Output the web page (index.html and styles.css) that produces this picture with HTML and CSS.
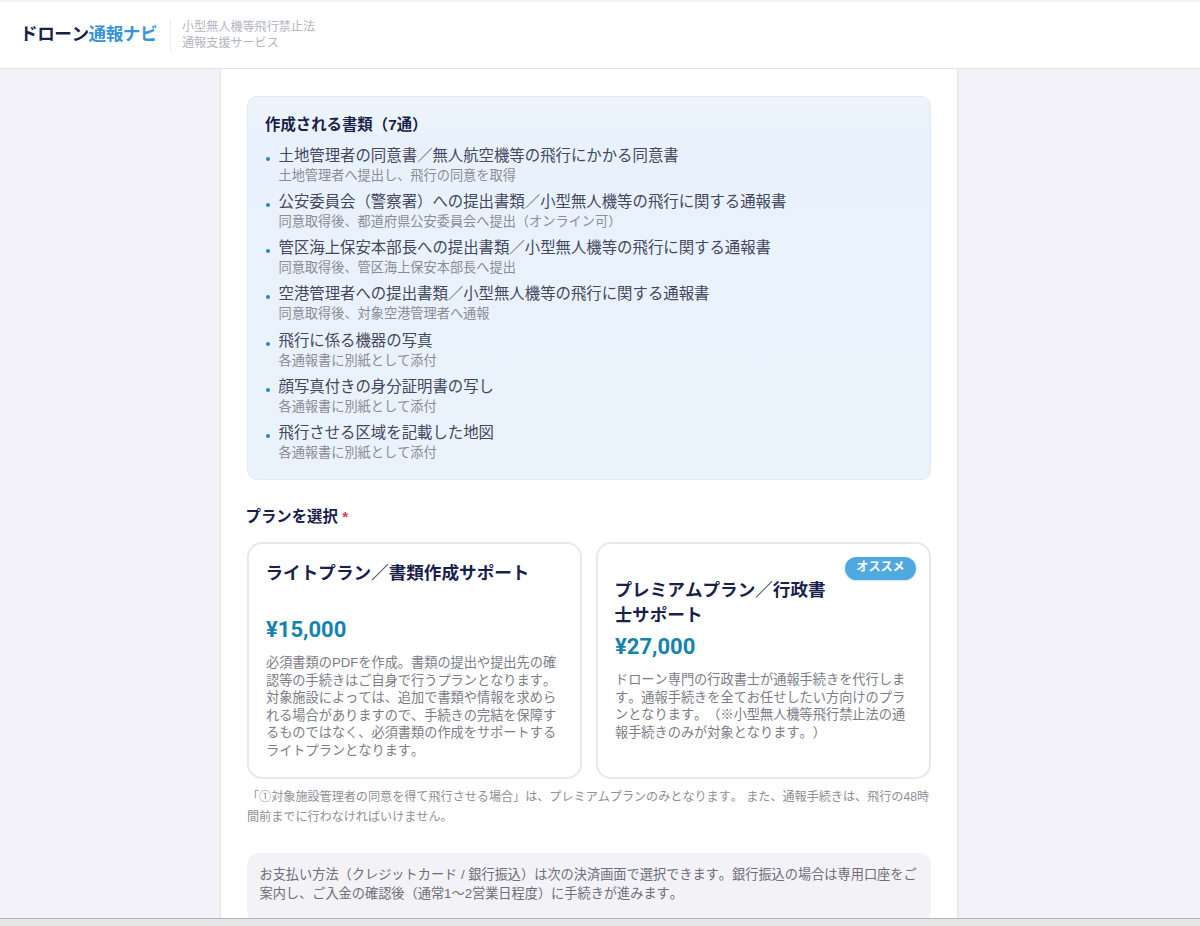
FILE: index.html
```html
<!DOCTYPE html>
<html lang="ja">
<head>
<meta charset="utf-8">
<title>ドローン通報ナビ</title>
<link rel="stylesheet" href="styles.css">
</head>
<body>
<div class="page">
  <header class="site-header">
    <div class="logo"><span class="logo-dark">ドローン</span><span class="logo-blue">通報ナビ</span></div>
    <div class="tagline">小型無人機等飛行禁止法<br>通報支援サービス</div>
  </header>
  <div class="stage">
    <main class="panel">
      <section class="docs">
        <h2 class="docs-title">作成される書類（7通）</h2>
        <ul class="doc-list">
          <li class="doc"><div class="doc-name">土地管理者の同意書／無人航空機等の飛行にかかる同意書</div><div class="doc-sub">土地管理者へ提出し、飛行の同意を取得</div></li>
          <li class="doc"><div class="doc-name">公安委員会（警察署）への提出書類／小型無人機等の飛行に関する通報書</div><div class="doc-sub">同意取得後、都道府県公安委員会へ提出（オンライン可）</div></li>
          <li class="doc"><div class="doc-name">管区海上保安本部長への提出書類／小型無人機等の飛行に関する通報書</div><div class="doc-sub">同意取得後、管区海上保安本部長へ提出</div></li>
          <li class="doc"><div class="doc-name">空港管理者への提出書類／小型無人機等の飛行に関する通報書</div><div class="doc-sub">同意取得後、対象空港管理者へ通報</div></li>
          <li class="doc"><div class="doc-name">飛行に係る機器の写真</div><div class="doc-sub">各通報書に別紙として添付</div></li>
          <li class="doc"><div class="doc-name">顔写真付きの身分証明書の写し</div><div class="doc-sub">各通報書に別紙として添付</div></li>
          <li class="doc"><div class="doc-name">飛行させる区域を記載した地図</div><div class="doc-sub">各通報書に別紙として添付</div></li>
        </ul>
      </section>
      <h2 class="plan-heading">プランを選択 <span class="required">*</span></h2>
      <div class="plans">
        <article class="plan">
          <h3 class="plan-title plan-title-tall">ライトプラン／書類作成サポート</h3>
          <div class="price">¥15,000</div>
          <p class="plan-desc">必須書類のPDFを作成。書類の提出や提出先の確認等の手続きはご自身で行うプランとなります。対象施設によっては、追加で書類や情報を求められる場合がありますので、手続きの完結を保障するものではなく、必須書類の作成をサポートするライトプランとなります。</p>
        </article>
        <article class="plan plan-premium">
          <span class="badge">オススメ</span>
          <h3 class="plan-title plan-title-narrow">プレミアムプラン／行政書士サポート</h3>
          <div class="price">¥27,000</div>
          <p class="plan-desc">ドローン専門の行政書士が通報手続きを代行します。通報手続きを全てお任せしたい方向けのプランとなります。（※小型無人機等飛行禁止法の通報手続きのみが対象となります。）</p>
        </article>
      </div>
      <p class="notice">「①対象施設管理者の同意を得て飛行させる場合」は、プレミアムプランのみとなります。 また、通報手続きは、飛行の48時間前までに行わなければいけません。</p>
      <div class="payment">お支払い方法（クレジットカード / 銀行振込）は次の決済画面で選択できます。銀行振込の場合は専用口座をご案内し、ご入金の確認後（通常1〜2営業日程度）に手続きが進みます。</div>
    </main>
  </div>
  <div class="bottom-strip"></div>
</div>
</body>
</html>
```
FILE: styles.css
```css
* { box-sizing: border-box; }
html, body { margin: 0; padding: 0; height: 100%; }
body {
  font-family: "Liberation Sans", "Noto Sans CJK JP", sans-serif;
  font-kerning: none;
  text-spacing-trim: space-all;
  background: #f3f2f8;
  color: #1b1f4b;
  overflow: hidden;
}
.page { height: 926px; display: flex; flex-direction: column; overflow: hidden; }
.site-header {
  height: 69px;
  flex: none;
  background: #fff;
  border-top: 2px solid #f3f3f3;
  border-bottom: 1px solid #e4e4e8;
  display: flex;
  align-items: center;
  padding: 0 0 1px 20px;
}
.logo { font-size: 17.6px; font-weight: 700; letter-spacing: -0.45px; line-height: 1; width: 137px; white-space: nowrap; }
.logo-dark { color: #1a1f4c; }
.logo-blue { color: #3a93d8; }
.tagline {
  margin-left: 13px;
  padding-left: 11px;
  border-left: 1px solid #ececf0;
  font-size: 12.1px;
  line-height: 16px;
  color: #b3b5bf;
}
.stage { flex: 1; min-height: 0; display: flex; justify-content: center; overflow: hidden; }
.panel {
  width: 740px;
  margin-left: -22px;
  background: #fff;
  border-left: 2px solid #e9e9ee;
  border-right: 2px solid #e9e9ee;
  padding: 27px 26px 0;
  overflow: hidden;
}
.docs {
  height: 384px;
  background: linear-gradient(180deg, #eef4fb 0, #e9f2fc 40px, #eaf2fc 100%);
  border: 1px solid #e0e9f4;
  border-radius: 10px;
  padding: 18px 17px 0;
}
.docs-title { margin: 0 0 9px; font-size: 15.4px; line-height: 20px; font-weight: 700; color: #1a1f4c; }
.doc-list { list-style: none; margin: 0; padding: 0; }
.doc { position: relative; padding-left: 13.5px; height: 46.15px; }
.doc::before {
  content: "";
  position: absolute;
  left: 1px;
  top: 13px;
  width: 4px;
  height: 4px;
  border-radius: 50%;
  background: #1a8fb5;
}
.doc-name { font-size: 15.4px; line-height: 23px; color: #44475f; white-space: nowrap; }
.doc-sub { font-size: 13.2px; line-height: 17px; color: #8b8c95; white-space: nowrap; }
.plan-heading { margin: 27px 0 0 -1.5px; font-size: 15.4px; line-height: 20px; font-weight: 700; color: #1a1f4c; }
.required { color: #d9405a; }
.plans { display: grid; grid-template-columns: 335px 335px; column-gap: 14px; margin-top: 15px; }
.plan {
  position: relative;
  height: 237px;
  background: #fff;
  border: 2px solid #e8e8ee;
  border-radius: 15px;
  padding: 17px 17px 0;
}
.plan-premium { padding-top: 34px; }
.plan-title { margin: 0 0 0 -0.5px; font-size: 17.6px; line-height: 25px; font-weight: 700; color: #1a1f4c; }
.plan-title-tall { height: 50px; }
.plan-title-narrow { width: 225px; }
.price { margin-top: 3px; font-family: Roboto, "Liberation Sans", sans-serif; font-size: 22px; line-height: 31px; font-weight: 700; color: #1583ad; }
.plan-desc { margin: 9px 0 0; font-size: 13.2px; line-height: 17.6px; color: #7c7d87; }
.badge {
  position: absolute;
  top: 13px;
  right: 13px;
  width: 71px;
  height: 23px;
  border-radius: 12px;
  background: #4fa9df;
  box-shadow: 0 1px 2px rgba(79, 169, 223, 0.3);
  color: #fff;
  font-size: 12.1px;
  line-height: 21px;
  font-weight: 700;
  text-align: center;
}
.notice { margin: 8px 0 0; font-size: 12.1px; line-height: 20px; color: #8f8f95; }
.payment {
  margin-top: 26px;
  background: #f3f2f7;
  border-radius: 12px;
  padding: 12px 12.5px 0;
  height: 70px;
  font-size: 13.2px;
  line-height: 19px;
  color: #6d6e78;
}
.bottom-strip { height: 8px; flex: none; background: #e8e6e8; border-top: 1px solid #b4b4b8; }
```
